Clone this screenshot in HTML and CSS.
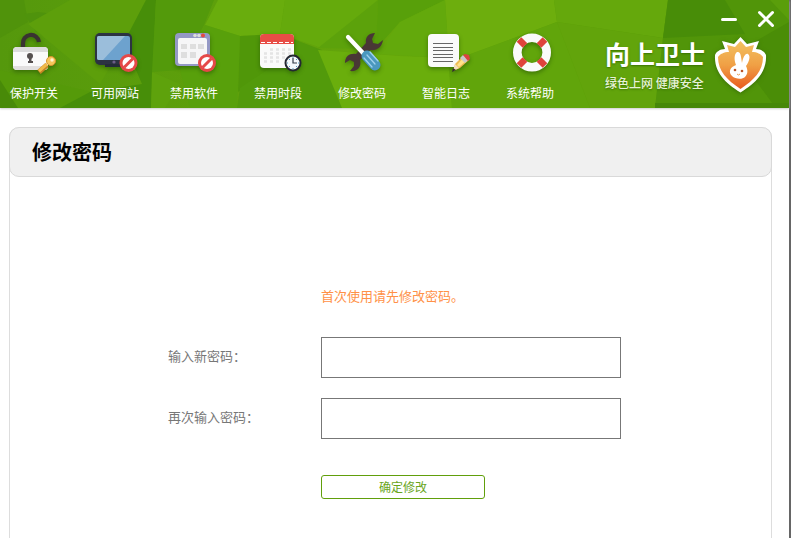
FILE: index.html
```html
<!DOCTYPE html>
<html lang="zh-CN">
<head>
<meta charset="utf-8">
<meta name="viewport" content="width=device-width, initial-scale=1">
<title>向上卫士</title>
<link rel="stylesheet" href="styles.css">
</head>
<body>
<div class="window">
  <header class="header">
    <svg class="backdrop" viewBox="0 0 789 108" preserveAspectRatio="none" aria-hidden="true">
      <defs>
        <linearGradient id="bgBase" x1="0" x2="1" y1="0" y2="0">
          <stop offset="0" stop-color="#55980c"/><stop offset=".5" stop-color="#65a60b"/><stop offset="1" stop-color="#529708"/>
        </linearGradient>
      </defs>
      <rect width="789" height="108" fill="url(#bgBase)"/>
      <path d="M0 0H24L28 22 0 38Z" fill="#50930b"/>
      <path d="M24 14 38 12 70 16 64 24 36 32Z" fill="#4f930c"/>
      <path d="M70 0H146L126 40 100 84 28 24Z" fill="#5d9f0b"/>
      <path d="M0 70 40 80 92 92 80 108H0Z" fill="#559a09"/>
      <path d="M0 80 18 108H0Z" fill="#488a08"/>
      <path d="M146 0H156L151 108H60L90 92 142 84 124 42Z" fill="#478e09"/>
      <path d="M156 0H214L204 25 180 70 152 72Z" fill="#539a0b"/>
      <path d="M152 72 180 84 165 108H151Z" fill="#5ea20c"/>
      <path d="M218 0H285L280 34 240 36 205 25Z" fill="#69ad0d"/>
      <path d="M285 0H378L322 48 280 34Z" fill="#65aa0c"/>
      <path d="M205 25 240 36 237 108H190L180 70Z" fill="#58a00b"/>
      <path d="M240 36 280 34 270 70 238 92Z" fill="#509709"/>
      <path d="M280 34 322 50 342 108H237L240 88 270 68Z" fill="#529a0b"/>
      <path d="M378 0 376 49 318 48Z" fill="#5ca20b"/>
      <path d="M378 0H445L400 22 376 49Z" fill="#58a00a"/>
      <path d="M318 50 400 56 448 58 452 108H342Z" fill="#6aae0c"/>
      <path d="M445 0H554L557 22 449 62Z" fill="#6dae0d"/>
      <path d="M449 62 557 22 590 108H452Z" fill="#61a50b"/>
      <path d="M400 22 445 0 449 58 376 54Z" fill="#63a90c"/>
      <path d="M554 0H668L663 38 557 22Z" fill="#65a80c"/>
      <path d="M557 22 663 38 655 108H590Z" fill="#62a40b"/>
      <path d="M668 0H770L789 16V108H655L663 38Z" fill="#519509"/>
      <path d="M668 0H725L745 34 663 38Z" fill="#488d08"/>
      <path d="M735 53 789 22V108H776Z" fill="#4a8d07"/>
      <path d="M655 103H789V108H655Z" fill="#468808"/>
      <path d="M770 0H789V20Z" fill="#5a9e0b"/>
    </svg>

    <nav class="nav" aria-label="主菜单">
      <a class="nav-item" href="#switch">
        <svg class="icon" viewBox="0 0 48 46" aria-hidden="true">
          <path d="M13 18V14a8 8 0 0 1 16-2" fill="none" stroke="#393331" stroke-width="4.200"/>
          <rect x="3" y="17" width="35" height="23" rx="4" fill="#fafafa"/>
          <path d="M3 22v-1a4 4 0 0 1 4-4h27a4 4 0 0 1 4 4v1Z" fill="#dcdcdc"/>
          <path d="M3 36h35a4 4 0 0 1-4 4H7a4 4 0 0 1-4-4Z" fill="#e2e0e0"/>
          <circle cx="20" cy="26" r="3" fill="#55504f"/><path d="M19 27h2.500v4H23v2h-5v-2h1Z" fill="#55504f"/>
          <path d="m37 35-8 7" stroke="#c58524" stroke-width="5"/><path d="m37 34-8 7" stroke="#f1b94a" stroke-width="3"/>
          <circle cx="41" cy="31" r="4.500" fill="#f6c65b" stroke="#d9942f"/><circle cx="42" cy="30" r="1.700" fill="#fff2cf"/>
        </svg>
        <span>保护开关</span>
      </a>
      <a class="nav-item" href="#sites">
        <svg class="icon" viewBox="0 0 48 46" aria-hidden="true">
          <rect x="4" y="3" width="37" height="32" rx="5" fill="#2c3342"/><path d="M14 34h18v3H14Z" fill="#252c39"/>
          <rect x="6" y="6" width="33" height="24" rx="2" fill="#6da2ce"/><path d="M8 6h26L12 30H8a2 2 0 0 1-2-2V8a2 2 0 0 1 2-2Z" fill="#9bbedb"/>
          <circle cx="23" cy="32" r="1.600" fill="#6c5d87"/>
          <circle cx="37.500" cy="33" r="9" fill="#e54948"/><circle cx="37.500" cy="33" r="6" fill="#fff"/><path d="m33 37.500 9-9" stroke="#e54948" stroke-width="3"/>
        </svg>
        <span>可用网站</span>
      </a>
      <a class="nav-item" href="#software">
        <svg class="icon" viewBox="0 0 48 46" aria-hidden="true">
          <rect x="5" y="3" width="35" height="33" rx="4" fill="#9498c5"/><rect x="8" y="8" width="29" height="26" rx="2" fill="#f6f6f7"/>
          <circle cx="25" cy="5.500" r="1.800" fill="#ddd"/><circle cx="29" cy="5.500" r="1.800" fill="#ddd"/><circle cx="33" cy="5.500" r="2" fill="#e54942"/>
          <path d="M11 14h6v5h-6Zm9 0h6v5h-6Zm8 0h6v5h-6ZM11 22h6v6h-6Zm9 0h6v6h-6Z" fill="#dedede"/>
          <circle cx="37" cy="33" r="9" fill="#e54948"/><circle cx="37" cy="33" r="6" fill="#fff"/><path d="m32.500 37.500 9-9" stroke="#e54948" stroke-width="3"/>
        </svg>
        <span>禁用软件</span>
      </a>
      <a class="nav-item" href="#hours">
        <svg class="icon" viewBox="0 0 48 46" aria-hidden="true">
          <rect x="6" y="4" width="34" height="34" rx="4" fill="#fafafa"/><path d="M6 14V8a4 4 0 0 1 4-4h26a4 4 0 0 1 4 4v6Z" fill="#e84d46"/>
          <path d="M7 12.500h32" stroke="#fff" stroke-dasharray="4 2"/>
          <path d="M16 19.500h21M10 23.500h27M10 27.500h27M10 31.500h15" stroke="#e4e4e4" stroke-width="2.500" stroke-dasharray="3 3"/>
          <circle cx="39" cy="33" r="7.500" fill="#f4f8fa" stroke="#242832" stroke-width="2"/>
          <path d="M39 27v1m0 10v1m-6-6h1m10 0h1M35 29l1 1m6 6 1 1m0-8-1 1m-6 6-1 1" stroke="#4e9dc8"/>
          <path d="M39 28v5h4" fill="none" stroke="#333b46" stroke-width="1.200"/>
        </svg>
        <span>禁用时段</span>
      </a>
      <a class="nav-item" href="#password">
        <svg class="icon" viewBox="0 0 48 46" aria-hidden="true">
          <path d="M37 3c-6 0-10 4-9 10L18 24c-6-1-11 2-11 9l5-3 4 2v4l-4 5c7 1 12-4 10-11l10-10c7 1 12-3 13-10l-5 4-5-1-1-4Z" fill="#493735"/>
          <path d="m10 7 15 16" stroke="#fff" stroke-width="4.200" stroke-linecap="round"/>
          <path d="m29 26 8 9" stroke="#4b98bf" stroke-width="11" stroke-linecap="round"/>
          <path d="m26 28 8 9m-5-12 8 9m-5-12 8 9" stroke="#9ed0ee" stroke-width="1.300" stroke-linecap="round"/>
        </svg>
        <span>修改密码</span>
      </a>
      <a class="nav-item" href="#log">
        <svg class="icon" viewBox="0 0 48 46" aria-hidden="true">
          <rect x="6" y="4" width="31" height="33" rx="4" fill="#fafafa"/>
          <path d="M11 13.500h20M11 17.500h20M11 20.500h20M11 24.500h20M11 27.500h20M11 31.500h20" stroke="#666"/>
          <path d="m31 41 2-7 9-9 5 5-9 8Z" fill="#efbd54"/><path d="m35 35 7-8 3 3-8 7Z" fill="#ffe28b"/>
          <path d="m31 41 2-7 4 4Z" fill="#f4dfbd"/><path d="m30 42 1-4 3 2Z" fill="#35302c"/>
          <path d="m38 28 3-3 5 5-3 3Z" fill="#c8c8cb"/><path d="m41 25 2-1 4 1 1 4-2 2Z" fill="#db4240"/>
        </svg>
        <span>智能日志</span>
      </a>
      <a class="nav-item" href="#help">
        <svg class="icon" viewBox="0 0 48 46" aria-hidden="true">
          <circle cx="26" cy="22.500" r="14.700" fill="none" stroke="#fafafa" stroke-width="8.600"/>
          <path d="m13 9.500 6 6m14 14 6 6M39 9.500l-6 6M19 29.500l-6 6" stroke="#df433b" stroke-width="6.500"/>
        </svg>
        <span>系统帮助</span>
      </a>
    </nav>

    <div class="side">
      <div class="controls">
        <button class="control" type="button" aria-label="最小化">
          <svg viewBox="0 0 20 20" aria-hidden="true"><path d="M3.500 10.500h13"/></svg>
        </button>
        <button class="control" type="button" aria-label="关闭">
          <svg viewBox="0 0 20 20" aria-hidden="true"><path d="m3.500 3.500 13 13M16.500 3.500l-13 13"/></svg>
        </button>
      </div>
      <div class="brand">
        <div class="brand-text">
          <strong class="brand-name">向上卫士</strong>
          <span class="tagline">绿色上网 健康安全</span>
        </div>
        <svg class="shield" viewBox="0 0 54 56" aria-hidden="true">
          <defs>
            <linearGradient id="shieldFill" x1="0" x2="0" y1="0" y2="1">
              <stop offset="0" stop-color="#f2c160"/><stop offset=".5" stop-color="#f0a045"/><stop offset="1" stop-color="#e85c20"/>
            </linearGradient>
          </defs>
          <path d="m9 4 12 3 6.500-7L34 7l12-3-3 8c5 0 9 3 10 6 1 17-10 28-25.500 37.500C12 46 1 35 2 18c1-3 5-6 10-6Z" fill="#fff"/>
          <path d="m14 8 8 2 5.500-6 5.500 6 8-2-2 7c5 0 9 2 11 5 0 14-9 23-22.500 32C14 43 5 34 5 20c2-3 6-5 11-5Z" fill="url(#shieldFill)"/>
          <path d="M23 28c-2-5-2-11 1-13 4-1 4 5 5 11 1-5 3-10 6-9 3 2 1 8-2 12 2 4 2 8-1 11-3 3-10 2-13-1-4-4-2-9 4-11Z" fill="#fff"/>
          <circle cx="22" cy="33" r="1.300" fill="#bb5426"/><circle cx="29" cy="34" r="1.300" fill="#bb5426"/><path d="m24 37 1.500 1 1.500-1" fill="none" stroke="#e99b55"/>
        </svg>
      </div>
    </div>
  </header>

  <main class="panel" id="password">
    <h1 class="panel-title">修改密码</h1>
    <form class="form">
      <p class="hint">首次使用请先修改密码。</p>
      <label class="label" for="new-password">输入新密码：</label>
      <input class="field" id="new-password" type="password">
      <label class="label" for="repeat-password">再次输入密码：</label>
      <input class="field" id="repeat-password" type="password">
      <button class="submit" type="submit">确定修改</button>
    </form>
  </main>
</div>
</body>
</html>
```
FILE: styles.css
```css
* {
  box-sizing: border-box;
}

body {
  margin: 0;
  background: #fff;
  color: #777;
  font: 13px/20px "Noto Sans CJK SC", sans-serif;
}

button,
input {
  font: inherit;
}

.window {
  display: flex;
  flex-direction: column;
  min-height: 100vh;
  border-right: 2px solid #666;
}

.header {
  position: relative;
  display: flex;
  justify-content: space-between;
  height: 108px;
  color: #fff;
  box-shadow: 0 1px 2px #ccc;
}

.backdrop {
  position: absolute;
  inset: 0;
  width: 100%;
  height: 100%;
}

.nav {
  position: relative;
  display: grid;
  grid-template-columns: 81px 79px repeat(5, 84px);
  padding: 30px 0 0 10px;
}

.nav-item {
  display: flex;
  flex-direction: column;
  gap: 9px;
  width: 48px;
  color: #fff;
  font-size: 12px;
  line-height: 16px;
  text-decoration: none;
  white-space: nowrap;
}

.icon {
  width: 48px;
  height: 46px;
  overflow: visible;
  filter: drop-shadow(0 2px 2px rgb(20 60 0 / 45%));
}

.side {
  position: relative;
  display: flex;
  flex-direction: column;
  gap: 8px;
  padding-top: 9px;
}

.controls {
  display: flex;
  justify-content: flex-end;
  gap: 17px;
  padding-right: 13px;
}

.control {
  width: 20px;
  height: 20px;
  padding: 0;
  border: 0;
  background: none;
}

.control svg {
  display: block;
  fill: none;
  stroke: #fff;
  stroke-width: 3;
  stroke-linecap: round;
}

.brand {
  display: flex;
  gap: 8px;
  padding-right: 22px;
}

.brand-text {
  display: flex;
  flex-direction: column;
  gap: 2px;
  text-shadow: 0 1px 2px #3a7400;
  white-space: nowrap;
}

.brand-name {
  font-size: 25px;
  line-height: 32px;
}

.tagline {
  color: #e6f2d6;
  font-size: 12px;
  font-weight: 500;
  line-height: 24px;
}

.shield {
  width: 54px;
  height: 56px;
  filter: drop-shadow(0 1px 2px #397006);
}

.panel {
  flex: 1;
  margin: 19px 17px 0 9px;
  border: solid #ddd;
  border-width: 0 1px;
  border-radius: 10px 10px 0 0;
}

.panel-title {
  height: 50px;
  margin: 0 -1px;
  padding-left: 22px;
  border: 1px solid #d9d9d9;
  border-radius: 10px;
  background: #f0f0f0;
  color: #000;
  font-size: 20px;
  line-height: 48px;
}

.form {
  display: grid;
  grid-template-columns: 153px minmax(0, 1fr);
  align-items: center;
  row-gap: 20px;
  max-width: 461px;
  margin: 0 auto;
  padding: 109px 0 39px 8px;
}

.hint,
.submit {
  grid-column: 2;
}

.hint {
  margin: 0 0 11px;
  color: #ff9147;
}

.label {
  padding-bottom: 4px;
}

.field {
  width: 100%;
  height: 41px;
  padding: 0 10px;
  border: 1px solid #777;
  border-radius: 0;
  background: #fff;
}

.submit {
  width: 164px;
  height: 24px;
  margin-top: 16px;
  padding: 0;
  border: 1px solid #619f0b;
  border-radius: 3px;
  background: #fff;
  color: #69a51c;
  font-size: 12px;
  line-height: 20px;
}
```
